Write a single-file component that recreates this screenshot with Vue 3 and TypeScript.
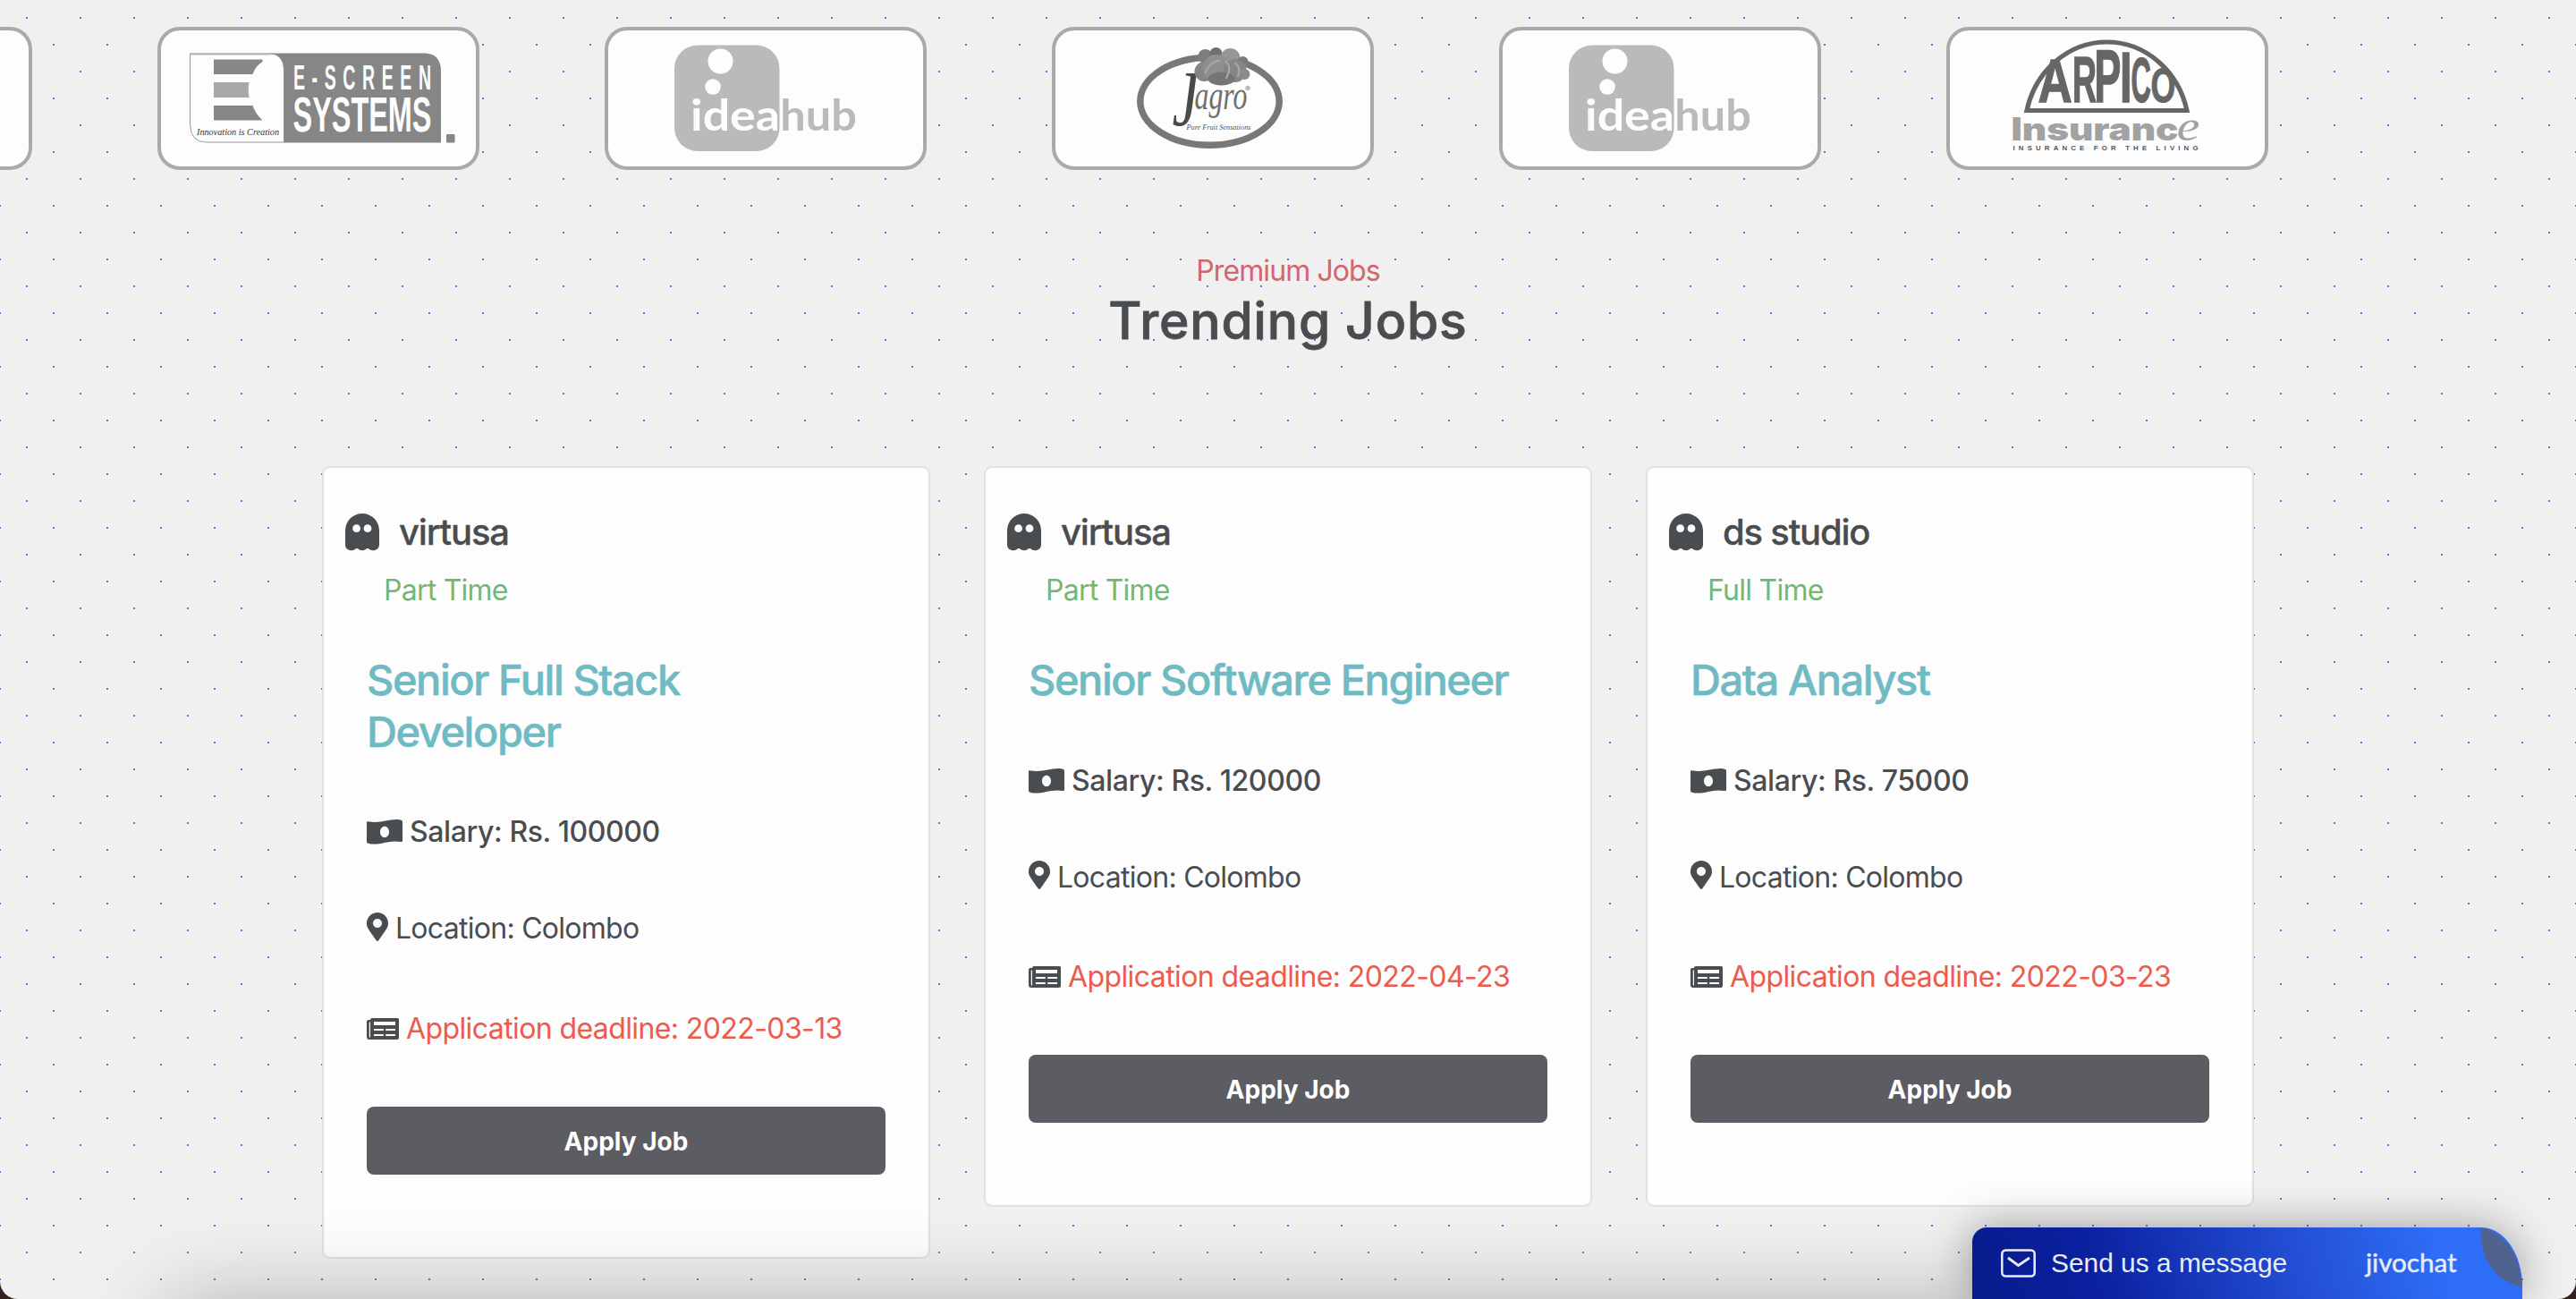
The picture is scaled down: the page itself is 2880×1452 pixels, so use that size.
<script setup lang="ts">
interface Job {
  company: string
  type: string
  title: string
  salary: string
  location: string
  deadline: string
}

type Logo = 'blank' | 'escreen' | 'ideahub' | 'jagro' | 'arpico'

const logos: Logo[] = ['blank', 'escreen', 'ideahub', 'jagro', 'ideahub', 'arpico']

const jobs: Job[] = [
  { company: 'virtusa', type: 'Part Time', title: 'Senior Full Stack Developer', salary: '100000', location: 'Colombo', deadline: '2022-03-13' },
  { company: 'virtusa', type: 'Part Time', title: 'Senior Software Engineer', salary: '120000', location: 'Colombo', deadline: '2022-04-23' },
  { company: 'ds studio', type: 'Full Time', title: 'Data Analyst', salary: '75000', location: 'Colombo', deadline: '2022-03-23' },
]

// Arched lettering: x, width scale and height scale of each letter on one baseline
const arpico = [
  { c: 'A', x: 102, sx: 1.3, sy: 1.7 },
  { c: 'R', x: 140.5, sx: 0.92, sy: 1.79 },
  { c: 'P', x: 165, sx: 1.1, sy: 2.06 },
  { c: 'I', x: 193.5, sx: 1.2, sy: 1.96 },
  { c: 'C', x: 206, sx: 0.76, sy: 1.75 },
  { c: 'O', x: 228, sx: 0.88, sy: 1.3 },
]
</script>

<template>
  <div class="desktop">
    <main class="page">
      <svg class="dots" width="2880" height="1452" shape-rendering="crispEdges" aria-hidden="true">
        <defs>
          <pattern id="dots" width="60" height="60" patternUnits="userSpaceOnUse">
            <rect x="29" y="19" width="2" height="2" />
            <rect x="0" y="49" width="1" height="2" />
            <rect x="59" y="49" width="1" height="2" />
          </pattern>
        </defs>
        <rect width="2880" height="1452" fill="url(#dots)" />
      </svg>

      <section class="partners">
        <div v-for="(logo, i) in logos" :key="i" class="partner">
          <svg v-if="logo === 'escreen'" viewBox="3.5 4 352 152">
            <path d="M36 30H126Q141 30 141 48V129H54Q36 129 36 108Z" fill="#fdfdfd" stroke="#999" />
            <path d="M36 30.500H126" stroke="#b5b5b5" stroke-width="2" />
            <path d="M124 29.500H300Q316.500 31 316.500 50V129.500H141V50Q141 31 124 29.500Z" fill="#868686" />
            <path d="M62.500 36.500H117V39Q109 44 106 53H62.500ZM62.500 88H106Q109 97 117 104.500H62.500Z" fill="#878787" />
            <path d="M62.500 62H102Q100.500 70 102 79H62.500Z" fill="#a8a8a8" />
            <text class="script" x="43.500" y="120.500" font-size="11" textLength="92" lengthAdjust="spacingAndGlyphs" fill="#333">Innovation is Creation</text>
            <text class="arial" transform="translate(151.500 70) scale(.5 1)" font-size="39" textLength="308" fill="#fdfdfd">E-SCREEN</text>
            <text class="arial" x="151" y="117" font-size="56" textLength="155" lengthAdjust="spacingAndGlyphs" fill="#fdfdfd">SYSTEMS</text>
            <rect x="322.500" y="120" width="9.500" height="9.500" rx="1" fill="#868686" />
          </svg>
          <svg v-else-if="logo === 'ideahub'" viewBox="3.5 4 352 152">
            <rect x="77.500" y="20.500" width="117.500" height="118.500" rx="26" fill="#bababa" />
            <circle cx="129" cy="38.500" r="14" fill="#fdfdfd" />
            <circle cx="120.500" cy="67" r="8.800" fill="#fdfdfd" />
            <text class="lato" x="95.500" y="115.500" font-size="48" textLength="100" lengthAdjust="spacingAndGlyphs" fill="#fdfdfd">idea</text>
            <text class="lato" x="195.800" y="115.500" font-size="48" textLength="85.500" lengthAdjust="spacingAndGlyphs" fill="#bababa">hub</text>
          </svg>
          <svg v-else-if="logo === 'jagro'" viewBox="3.5 4 352 152">
            <ellipse cx="176" cy="83.300" rx="77.700" ry="49" fill="none" stroke="#787878" stroke-width="7.500" />
            <text class="script" transform="translate(134 110) scale(.76 1)" font-size="88" fill="#4a4a4a">J</text>
            <g>
              <circle cx="171" cy="33" r="8" fill="#7d7d7d" />
              <circle cx="183" cy="30" r="7" fill="#6f6f6f" />
              <circle cx="199" cy="35" r="11" fill="#969696" />
              <circle cx="213" cy="39" r="6" fill="#7a7a7a" />
              <circle cx="170" cy="50" r="11" fill="#858585" />
              <circle cx="183" cy="46" r="15" fill="#8f8f8f" />
              <circle cx="204" cy="49" r="13" fill="#868686" />
              <circle cx="215" cy="53" r="6" fill="#8b8b8b" />
              <ellipse cx="189" cy="58" rx="15" ry="7.500" fill="#757575" />
              <path d="M171 52Q176 38 188 38M194 58Q202 44 193 38M204 40Q212 46 207 56" fill="none" stroke="#a8a8a8" stroke-width="2" />
            </g>
            <text class="script" x="159" y="92" font-size="46" textLength="59" lengthAdjust="spacingAndGlyphs" fill="#707070">agro</text>
            <circle cx="218.500" cy="68.500" r="2.800" fill="#bbb" />
            <text class="script" x="150" y="115" font-size="8" textLength="72" lengthAdjust="spacingAndGlyphs" fill="#555">Pure Fruit Sensations</text>
          </svg>
          <svg v-else-if="logo === 'arpico'" viewBox="3.5 4 352 152">
            <path d="M89.500 93.500C99 50 135 17 179 17S259 50 268.500 93.500Z" fill="none" stroke="#666" stroke-width="5.200" />
            <text
              v-for="l in arpico"
              :key="l.c"
              class="arial"
              :transform="`translate(${l.x} 84.300) scale(${l.sx} ${l.sy})`"
              font-size="40.700"
              fill="#666"
              stroke="#666"
              stroke-width=".8"
            >{{ l.c }}</text>
            <text class="wide" x="72" y="126.500" font-size="35" textLength="187" lengthAdjust="spacingAndGlyphs" fill="#a2a2a2">Insuranc</text>
            <text class="script" x="257" y="126.500" font-size="49" textLength="26" lengthAdjust="spacingAndGlyphs" fill="#a2a2a2">e</text>
            <text class="arial" x="74" y="138.300" font-size="7.800" textLength="207" fill="#555">INSURANCE FOR THE LIVING</text>
          </svg>
        </div>
      </section>

      <header class="heading">
        <p>Premium Jobs</p>
        <h2>Trending Jobs</h2>
      </header>

      <section class="jobs">
        <article v-for="(job, i) in jobs" :key="i" class="job">
          <div class="company">
            <svg class="ghost" viewBox="0 0 38 42">
              <path fill-rule="evenodd" d="M19 0A19 19 0 0 0 0 19V34.500C0 39 3 41.300 7 41.300C10 41.300 11.500 39 13 39S16 41.300 19 41.300S23.500 39 25 39S28 41.300 31 41.300C35 41.300 38 39 38 34.500V19A19 19 0 0 0 19 0ZM12.600 12.300A4.400 4.400 0 1 1 12.600 21.100A4.400 4.400 0 1 1 12.600 12.300ZM25 12.300A4.400 4.400 0 1 1 25 21.100A4.400 4.400 0 1 1 25 12.300Z" />
            </svg>
            <span>{{ job.company }}</span>
          </div>
          <p class="type">{{ job.type }}</p>
          <h3>{{ job.title }}</h3>
          <p class="row salary">
            <svg width="40" height="28" viewBox="0 0 40 28">
              <path fill-rule="evenodd" d="M0 3.500Q0 2 1.500 2.300C15 5 23-.5 35 .1Q38 .4 39 1Q40 1.500 40 3V23.500Q40 25.300 38.300 25C25 22.500 17 28.500 5 27.500Q2.500 27.200 1 26.500Q0 26 0 24.500ZM20 7.800C17.200 7.800 15 10.500 15 13.900S17.200 20 20 20S25 17.300 25 13.900S22.800 7.800 20 7.800Z" />
            </svg>
            <span>Salary: Rs. {{ job.salary }}</span>
          </p>
          <p class="row location">
            <svg width="24" height="32" viewBox="0 0 384 512">
              <path d="M172.268 501.670C26.970 291.031 0 269.413 0 192 0 85.961 85.961 0 192 0s192 85.961 192 192c0 77.413-26.970 99.031-172.268 309.670-9.535 13.774-29.930 13.773-39.464 0zM192 272c44.183 0 80-35.817 80-80s-35.817-80-80-80-80 35.817-80 80 35.817 80 80 80z" />
            </svg>
            <span>Location: {{ job.location }}</span>
          </p>
          <p class="row deadline">
            <svg width="36" height="24" viewBox="0 0 36 24">
              <path fill-rule="evenodd" d="M6 0H34.500Q36 0 36 1.500V22Q36 24 34 24H3Q0 24 0 21V4Q0 2 2 2H4V1.500Q4 0 6 0ZM2.800 4.500V20.500Q2.800 21.700 3.400 21.700T4 20.500V4.500ZM8 4V8H32V4ZM8 12V14H18.800V12ZM21.200 12V14H32V12ZM8 18V20H18.800V18ZM21.200 18V20H32V18Z" />
            </svg>
            <span>Application deadline: {{ job.deadline }}</span>
          </p>
          <button type="button">Apply Job</button>
        </article>
      </section>

      <div class="dock-shadow"></div>

      <aside class="chat">
        <svg class="mail" viewBox="0 0 39 32">
          <rect x="1.300" y="1.500" width="36.400" height="29" rx="4" fill="none" stroke="#e8ecf5" stroke-width="2.500" />
          <path d="M8 10L19.500 18.500L32 10" fill="none" stroke="#e8ecf5" stroke-width="2.800" />
        </svg>
        <span class="message">Send us a message</span>
        <span class="brand">jivochat</span>
        <svg class="leaf" viewBox="0 0 46 66"><path d="M0 0C24 5 44 30 46 66C18 62-3 36 0 0Z" fill="#50638f" /></svg>
      </aside>
    </main>
  </div>
</template>

<style>
body {
  margin: 0;
}
</style>

<style scoped>
.desktop {
  height: 1452px;
  overflow: hidden;
  background: #33231f;
  font-family: Inter, 'Liberation Sans', sans-serif;
  color: #4a4d50;
}
.page {
  position: relative;
  box-sizing: border-box;
  width: 2880px;
  height: 1452px;
  padding-top: 30px;
  overflow: hidden;
  border-radius: 0 0 20px 20px;
  background: #f0f0f0;
}
.dots {
  position: absolute;
  inset: 0;
  fill: #6a6ee8;
}
p,
h2,
h3 {
  margin: 0;
}
.partners {
  position: relative;
  display: flex;
  gap: 140px;
  margin-left: -324px;
}
.partner {
  flex: none;
  box-sizing: border-box;
  width: 360px;
  height: 160px;
  border: 4px solid #aaa;
  border-radius: 25px;
  background: #fdfdfd;
}
.partner svg {
  display: block;
  width: 352px;
  height: 152px;
}
.arial {
  font-family: 'Liberation Sans', sans-serif;
  font-weight: 700;
}
.lato {
  font-family: Lato, sans-serif;
  font-weight: 700;
}
.script {
  font-family: 'Liberation Serif', serif;
  font-style: italic;
}
.wide {
  font-family: Inter, sans-serif;
  font-weight: 900;
}
.heading {
  position: relative;
  margin-top: 89px;
  text-align: center;
}
.heading p {
  font-size: 32px;
  line-height: 48px;
  letter-spacing: -0.9px;
  color: #d4656c;
}
.heading h2 {
  margin-top: -1px;
  font-size: 57px;
  line-height: 66px;
  font-weight: 500;
  letter-spacing: 0.85px;
  -webkit-text-stroke: 0.8px currentColor;
}
.jobs {
  position: relative;
  display: flex;
  align-items: flex-start;
  gap: 60px;
  margin: 129px 0 0 360px;
}
.job {
  box-sizing: border-box;
  width: 680px;
  padding: 48px 48px 92px;
  border: 2px solid #e1e1e1;
  border-radius: 9px;
  background: #fdfdfd;
}
.company {
  display: flex;
  align-items: center;
  gap: 22px;
  margin-left: -24px;
  font-size: 40px;
  line-height: 48px;
  font-weight: 500;
  letter-spacing: -1.2px;
  -webkit-text-stroke: 0.3px currentColor;
}
.ghost {
  width: 38px;
  height: 42px;
}
.job svg {
  flex: none;
  fill: #4a4d50;
}
.type {
  margin: 17px 0 0 19px;
  font-size: 32px;
  line-height: 48px;
  letter-spacing: -0.75px;
  color: #73b777;
}
h3 {
  margin-top: 47px;
  padding-right: 24px;
  font-size: 47px;
  line-height: 57.6px;
  font-weight: 500;
  letter-spacing: -1.45px;
  color: #6fbac3;
  -webkit-text-stroke: 0.5px currentColor;
}
.row {
  display: flex;
  align-items: center;
  gap: 8px;
  margin-top: 60px;
  font-size: 32px;
  line-height: 48px;
  letter-spacing: -0.72px;
}
.row.salary {
  font-weight: 500;
  letter-spacing: -0.4px;
}
.location svg {
  margin-bottom: 5px;
}
.row.deadline {
  margin-top: 63.5px;
  letter-spacing: -0.6px;
}
.deadline span {
  color: #ee5a4c;
}
button {
  display: block;
  width: 100%;
  height: 76px;
  margin-top: 63px;
  padding: 2px 0 0;
  border: 0;
  border-radius: 8px;
  background: #5b5d62;
  color: #fff;
  font: 700 28px Inter, sans-serif;
}
.dock-shadow {
  position: absolute;
  left: 200px;
  right: 200px;
  top: 1470px;
  height: 100px;
  box-shadow: 0 0 100px 10px rgba(0, 0, 0, 0.3);
}
.chat {
  position: absolute;
  left: 2205px;
  bottom: 0;
  display: flex;
  align-items: center;
  box-sizing: border-box;
  width: 615px;
  height: 80px;
  padding-left: 32px;
  border-radius: 16px 46px 0 0 / 16px 66px 0 0;
  background: linear-gradient(75deg, #081c8c 0%, #0a209f 22%, #2450d6 60%, #2e6ef7 85%);
  box-shadow: 0 0 50px rgba(0, 0, 0, 0.35);
  color: #e8ecf5;
}
.mail {
  width: 39px;
  height: 32px;
}
.message {
  width: 352px;
  margin-left: 17px;
  font: 29.9px 'Liberation Sans', sans-serif;
}
.brand {
  margin-bottom: 4px;
  font: 29.6px Lato, sans-serif;
  -webkit-text-stroke: 0.5px currentColor;
}
.leaf {
  position: absolute;
  top: 0;
  right: 0;
  width: 46px;
  height: 66px;
}
</style>
